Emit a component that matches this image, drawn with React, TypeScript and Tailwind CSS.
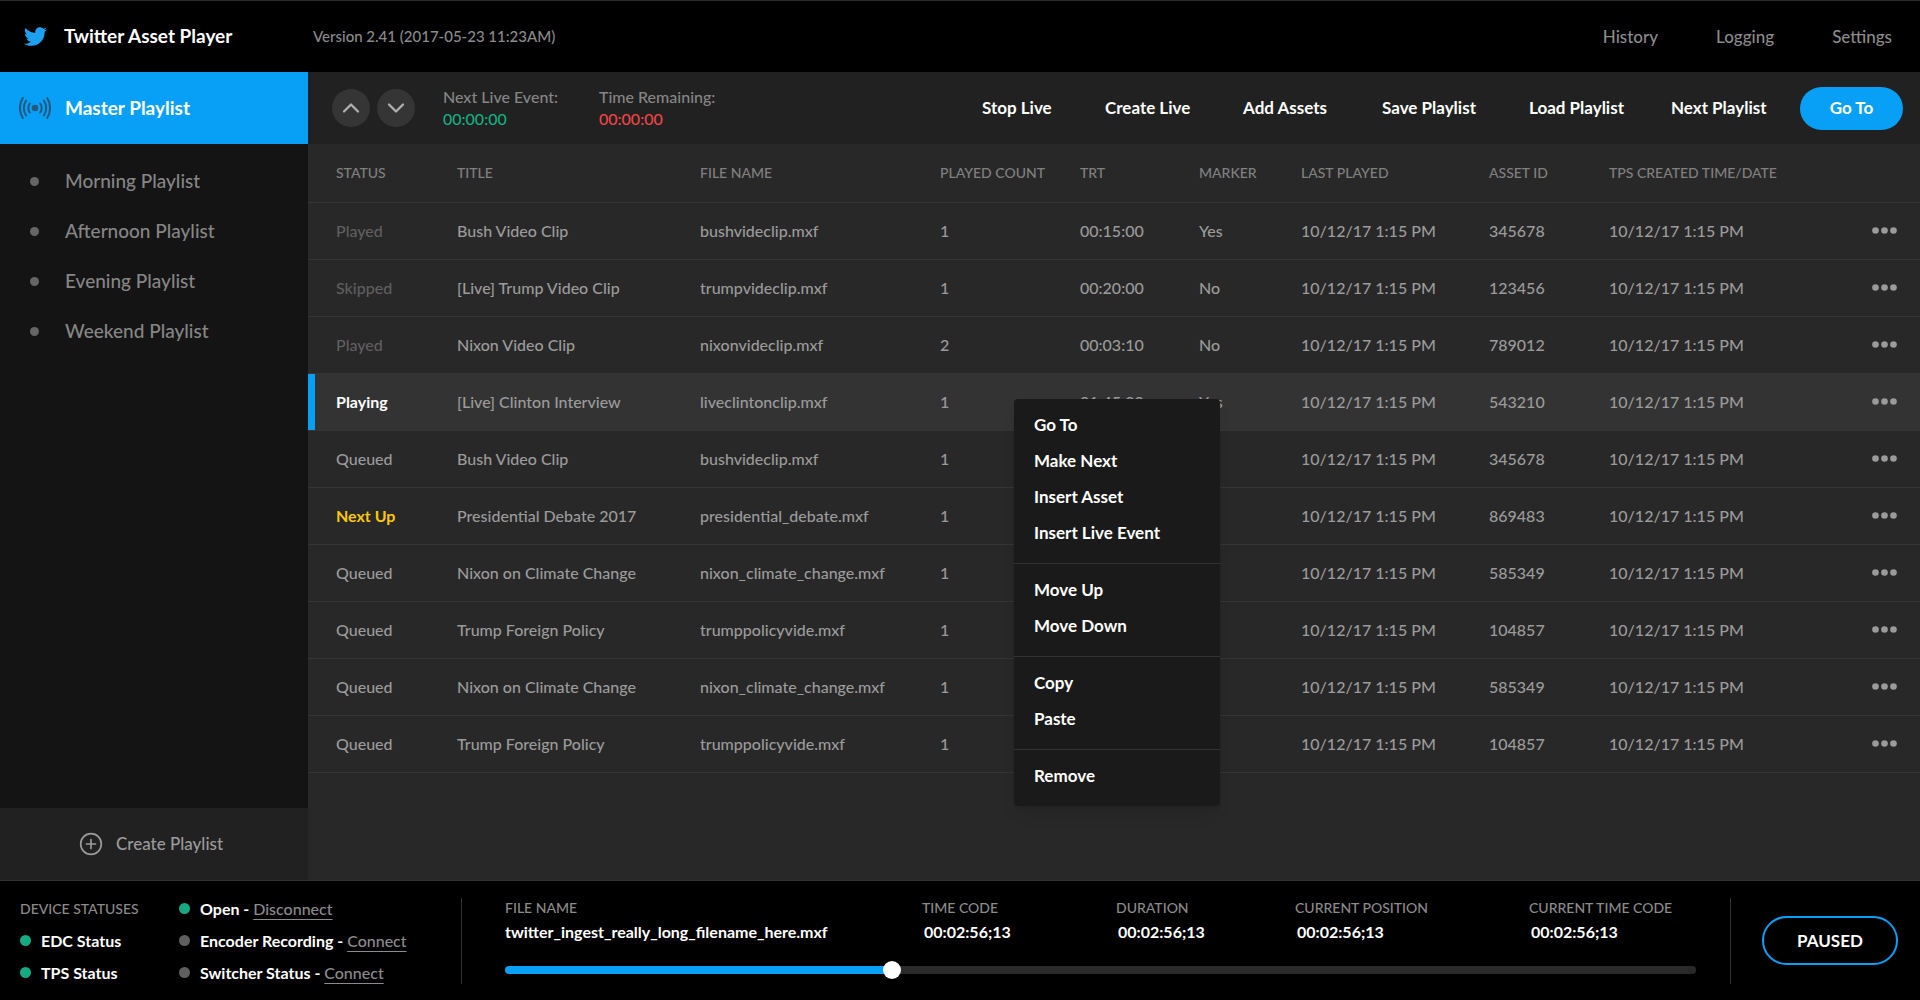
import { useState } from "react";
import { FaTwitter } from "react-icons/fa";

type Asset = {
  status: string;
  title: string;
  file: string;
  count: number;
  trt: string;
  marker: string;
  id: string;
};

const PLAYED_AT = "10/12/17 1:15 PM";

const assets: Asset[] = [
  { status: "Played", title: "Bush Video Clip", file: "bushvideclip.mxf", count: 1, trt: "00:15:00", marker: "Yes", id: "345678" },
  { status: "Skipped", title: "[Live] Trump Video Clip", file: "trumpvideclip.mxf", count: 1, trt: "00:20:00", marker: "No", id: "123456" },
  { status: "Played", title: "Nixon Video Clip", file: "nixonvideclip.mxf", count: 2, trt: "00:03:10", marker: "No", id: "789012" },
  { status: "Playing", title: "[Live] Clinton Interview", file: "liveclintonclip.mxf", count: 1, trt: "01:45:00", marker: "Yes", id: "543210" },
  { status: "Queued", title: "Bush Video Clip", file: "bushvideclip.mxf", count: 1, trt: "00:15:00", marker: "No", id: "345678" },
  { status: "Next Up", title: "Presidential Debate 2017", file: "presidential_debate.mxf", count: 1, trt: "00:15:00", marker: "No", id: "869483" },
  { status: "Queued", title: "Nixon on Climate Change", file: "nixon_climate_change.mxf", count: 1, trt: "00:15:00", marker: "No", id: "585349" },
  { status: "Queued", title: "Trump Foreign Policy", file: "trumppolicyvide.mxf", count: 1, trt: "00:15:00", marker: "No", id: "104857" },
  { status: "Queued", title: "Nixon on Climate Change", file: "nixon_climate_change.mxf", count: 1, trt: "00:15:00", marker: "No", id: "585349" },
  { status: "Queued", title: "Trump Foreign Policy", file: "trumppolicyvide.mxf", count: 1, trt: "00:15:00", marker: "No", id: "104857" },
];

const statusClass: Record<string, string> = {
  Played: "text-[#5f5f5f]",
  Skipped: "text-[#5f5f5f]",
  Playing: "text-white font-bold",
  "Next Up": "text-[#fdc70c] font-bold",
  Queued: "text-[#9b9b9b]",
};

const playlists = ["Morning Playlist", "Afternoon Playlist", "Evening Playlist", "Weekend Playlist"];
const actions = ["Stop Live", "Create Live", "Add Assets", "Save Playlist", "Load Playlist", "Next Playlist"];
const menuGroups = [
  ["Go To", "Make Next", "Insert Asset", "Insert Live Event"],
  ["Move Up", "Move Down"],
  ["Copy", "Paste"],
  ["Remove"],
];
const timings = ["TIME CODE", "DURATION", "CURRENT POSITION", "CURRENT TIME CODE"];

function BroadcastIcon() {
  return (
    <svg viewBox="0 0 32 24" className="h-6 w-8" fill="none" stroke="#24587c" strokeWidth="2" strokeLinecap="round" aria-hidden="true">
      <circle cx="16" cy="12" r="3.300" fill="#24587c" stroke="none" />
      <path d="M10.800 7.500C8.800 10 8.800 14 10.800 16.500M21.200 7.500C23.200 10 23.200 14 21.200 16.500" />
      <path d="M7.200 4.500C4 8.800 4 15.200 7.200 19.500M24.800 4.500C28 8.800 28 15.200 24.800 19.500" />
      <path d="M3.800 2C0 7.800 0 16.200 3.800 22M28.200 2C32 7.800 32 16.200 28.200 22" />
    </svg>
  );
}

function Chevron({ up = false }: { up?: boolean }) {
  return (
    <svg viewBox="0 0 18 12" className="h-3 w-[18px]" fill="none" stroke="currentColor" strokeWidth="2.300" strokeLinecap="round" strokeLinejoin="round" aria-hidden="true">
      <path d={up ? "M2 9.500 9 2.500 16 9.500" : "M2 2.500 9 9.500 16 2.500"} />
    </svg>
  );
}

function MoreIcon() {
  return (
    <svg viewBox="0 0 25 7" className="h-[7px] w-[25px]" fill="#9b9b9b" aria-hidden="true">
      <circle cx="3.500" cy="3.500" r="3.300" />
      <circle cx="12.500" cy="3.500" r="3.300" />
      <circle cx="21.500" cy="3.500" r="3.300" />
    </svg>
  );
}

function Header() {
  return (
    <header className="flex h-[72px] shrink-0 items-center border-t border-[#2a2a2a] bg-black pr-7">
      <div className="flex w-[313px] items-center gap-[17px] pl-6">
        <FaTwitter className="size-[23px] text-[#1da1f2]" aria-hidden="true" />
        <h1 className="text-[19px] font-bold text-white">Twitter Asset Player</h1>
      </div>
      <p className="text-[15px] text-[#8b8b8b]">Version 2.41 (2017-05-23 11:23AM)</p>
      <nav className="ml-auto flex gap-[58px] text-[17px] text-[#8b8b8b]">
        <a href="#history">History</a>
        <a href="#logging">Logging</a>
        <a href="#settings">Settings</a>
      </nav>
    </header>
  );
}

function Sidebar() {
  return (
    <aside className="flex w-[308px] shrink-0 flex-col bg-[#141414]">
      <button className="flex h-[72px] items-center gap-[14px] bg-[#089ff7] pl-[19px] text-[19px] font-bold text-white">
        <BroadcastIcon />
        Master Playlist
      </button>
      <ul className="mt-3 flex-1 text-[19px] text-[#868686]">
        {playlists.map((name) => (
          <li key={name}>
            <button className="flex h-[50px] w-full items-center gap-[26px] pl-[30px]">
              <span className="size-[9px] rounded-full bg-[#666]" />
              {name}
            </button>
          </li>
        ))}
      </ul>
      <button className="flex h-[72px] items-center gap-[13px] bg-[#212121] pl-[79px] text-[17px] text-[#9b9b9b]">
        <svg viewBox="0 0 24 24" className="size-6" fill="none" stroke="currentColor" strokeWidth="1.700" strokeLinecap="round" aria-hidden="true">
          <circle cx="12" cy="12" r="10.300" />
          <path d="M12 7.500v9M7.500 12h9" />
        </svg>
        Create Playlist
      </button>
    </aside>
  );
}

function Toolbar() {
  return (
    <div className="flex h-[72px] shrink-0 items-center bg-[#212121] pr-[17px] pl-6 text-base">
      <div className="flex gap-[7px]">
        <button aria-label="Previous" className="flex size-[38px] items-center justify-center rounded-full bg-[#353535] text-[#b0b0b0]">
          <Chevron up />
        </button>
        <button aria-label="Next" className="flex size-[38px] items-center justify-center rounded-full bg-[#353535] text-[#b0b0b0]">
          <Chevron />
        </button>
      </div>
      <dl className="ml-7 flex leading-[22px] text-[#868686]">
        <div className="w-[156px]">
          <dt>Next Live Event:</dt>
          <dd className="text-[#14b081]">00:00:00</dd>
        </div>
        <div>
          <dt>Time Remaining:</dt>
          <dd className="text-[#f04545]">00:00:00</dd>
        </div>
      </dl>
      <div className="ml-auto grid grid-cols-[123px_138px_139px_147px_142px_129px_103px] items-center text-[17px] font-bold text-white">
        {actions.map((label) => (
          <button key={label} className="text-left">
            {label}
          </button>
        ))}
        <button className="h-[43px] rounded-full bg-[#089ff7]">Go To</button>
      </div>
    </div>
  );
}

function AssetTable() {
  return (
    <table className="w-full table-fixed text-left text-base text-[#9b9b9b]">
      <colgroup>
        <col className="w-[149px]" />
        <col className="w-[243px]" />
        <col className="w-[240px]" />
        <col className="w-[140px]" />
        <col className="w-[119px]" />
        <col className="w-[102px]" />
        <col className="w-[188px]" />
        <col className="w-[120px]" />
        <col className="w-[241px]" />
        <col className="w-[70px]" />
      </colgroup>
      <thead>
        <tr className="h-[58px] border-b border-[#353535] text-sm text-[#808080] [&>th]:font-medium">
          <th className="pl-7">STATUS</th>
          <th>TITLE</th>
          <th>FILE NAME</th>
          <th>PLAYED COUNT</th>
          <th>TRT</th>
          <th>MARKER</th>
          <th>LAST PLAYED</th>
          <th>ASSET ID</th>
          <th>TPS CREATED TIME/DATE</th>
          <th aria-label="Actions" />
        </tr>
      </thead>
      <tbody>
        {assets.map((asset, index) => {
          const playing = asset.status === "Playing";
          return (
            <tr key={index} className={playing ? "h-[57px] border-b border-[#353535] bg-[#333]" : "h-[57px] border-b border-[#353535]"}>
              <td className={playing ? "pl-7 shadow-[inset_7px_0_0_#089ff7]" : "pl-7"}>
                <span className={statusClass[asset.status]}>{asset.status}</span>
              </td>
              <td>{asset.title}</td>
              <td>{asset.file}</td>
              <td>{asset.count}</td>
              <td>{asset.trt}</td>
              <td>{asset.marker}</td>
              <td>{PLAYED_AT}</td>
              <td>{asset.id}</td>
              <td>{PLAYED_AT}</td>
              <td>
                <button aria-label="More actions" className="ml-[22px] flex h-6 items-center">
                  <MoreIcon />
                </button>
              </td>
            </tr>
          );
        })}
      </tbody>
    </table>
  );
}

function ContextMenu() {
  return (
    <div role="menu" className="absolute top-[255px] left-[706px] w-[206px] rounded bg-[#1a1a1a] text-[17px] font-bold text-white shadow-lg">
      {menuGroups.map((group) => (
        <div key={group[0]} className="border-b border-[#333] pt-2 pb-3 last:border-b-0">
          {group.map((label) => (
            <button key={label} role="menuitem" className="block h-9 w-full px-5 text-left">
              {label}
            </button>
          ))}
        </div>
      ))}
    </div>
  );
}

function Dot({ on }: { on: boolean }) {
  return <span className={on ? "size-[11px] rounded-full bg-[#16a982]" : "size-[11px] rounded-full bg-[#5f5f5f]"} />;
}

function Seeker() {
  const [value, setValue] = useState(32.2);
  return (
    <input
      type="range"
      aria-label="Playback position"
      min={0}
      max={100}
      step={0.1}
      value={value}
      onChange={(event) => setValue(Number(event.target.value))}
      style={{ backgroundImage: `linear-gradient(to right, #089ff7 ${value}%, #2a2a2a ${value}%)` }}
      className="mt-5 block h-2 w-full appearance-none rounded-full [&::-webkit-slider-thumb]:size-[18px] [&::-webkit-slider-thumb]:appearance-none [&::-webkit-slider-thumb]:rounded-full [&::-webkit-slider-thumb]:bg-white"
    />
  );
}

function Footer() {
  return (
    <footer className="flex h-[120px] shrink-0 items-center border-t border-[#333] bg-black text-base text-white">
      <div className="flex w-[461px] shrink-0 pl-5 font-bold">
        <div className="flex w-[159px] flex-col gap-1.5">
          <h2 className="text-sm leading-[26px] font-medium text-[#8b8b8b]">DEVICE STATUSES</h2>
          <p className="flex items-center gap-2.5 leading-[26px]"><Dot on />EDC Status</p>
          <p className="flex items-center gap-2.5 leading-[26px]"><Dot on />TPS Status</p>
        </div>
        <div className="flex flex-col gap-1.5">
          <p className="flex items-center gap-2.5 leading-[26px]">
            <Dot on />
            <span>Open - <a href="#disconnect" className="font-medium text-[#8b8b8b] underline underline-offset-4">Disconnect</a></span>
          </p>
          <p className="flex items-center gap-2.5 leading-[26px]">
            <Dot on={false} />
            <span>Encoder Recording - <a href="#encoder" className="font-medium text-[#8b8b8b] underline underline-offset-4">Connect</a></span>
          </p>
          <p className="flex items-center gap-2.5 leading-[26px]">
            <Dot on={false} />
            <span>Switcher Status - <a href="#switcher" className="font-medium text-[#8b8b8b] underline underline-offset-4">Connect</a></span>
          </p>
        </div>
      </div>
      <div className="h-[86px] flex-1 border-x border-[#333] pr-[34px] pl-[43px]">
        <dl className="grid grid-cols-[417fr_194fr_179fr_234fr_167fr] leading-7">
          <div>
            <dt className="text-sm leading-5 text-[#8b8b8b]">FILE NAME</dt>
            <dd className="font-bold">twitter_ingest_really_long_filename_here.mxf</dd>
          </div>
          {timings.map((label) => (
            <div key={label}>
              <dt className="text-sm leading-5 text-[#8b8b8b]">{label}</dt>
              <dd className="pl-0.5 font-bold">00:02:56;13</dd>
            </div>
          ))}
        </dl>
        <Seeker />
      </div>
      <div className="shrink-0 pr-[22px] pl-[31px]">
        <button className="h-[49px] w-[136px] rounded-full border-2 border-[#089ff7] text-[17px] font-bold">PAUSED</button>
      </div>
    </footer>
  );
}

export default function App() {
  return (
    <div className="flex min-h-screen flex-col bg-[#282828] font-['Lato',sans-serif] font-medium">
      <Header />
      <div className="flex flex-1">
        <Sidebar />
        <main className="flex min-w-0 flex-1 flex-col">
          <Toolbar />
          <div className="relative flex-1">
            <AssetTable />
            <ContextMenu />
          </div>
        </main>
      </div>
      <Footer />
    </div>
  );
}
